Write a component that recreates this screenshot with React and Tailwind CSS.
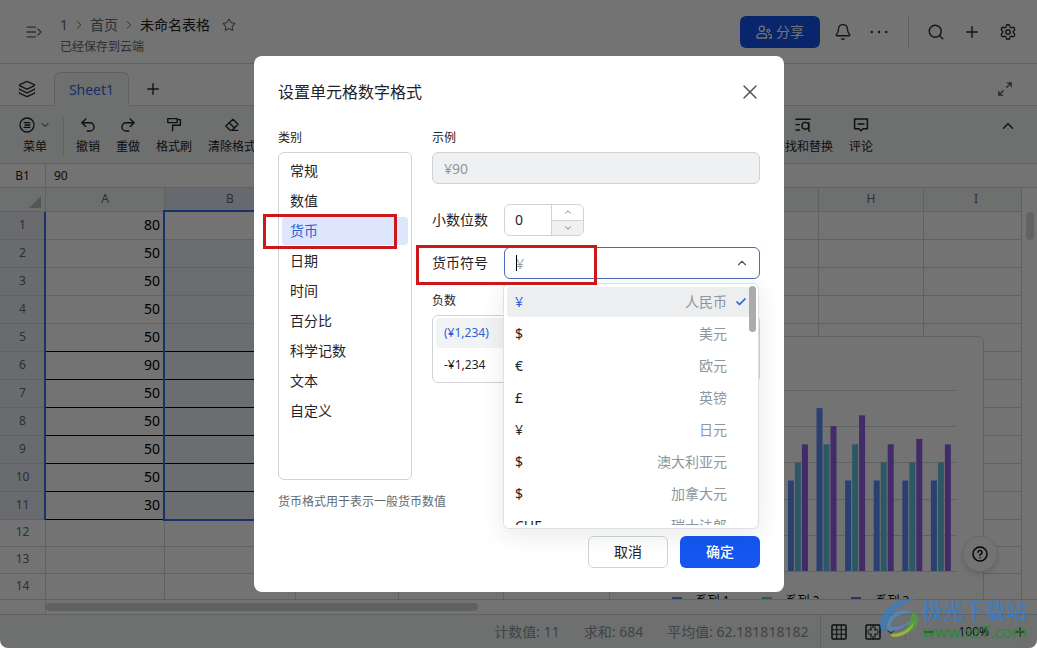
import React, { useState } from 'react';
import {
  Bell,
  Check,
  ChevronDown,
  ChevronRight,
  ChevronUp,
  Layers,
  Minus,
  Plus,
  Redo2,
  Search,
  Settings,
  Star,
  Undo2,
  X,
} from 'lucide-react';

const columns = ['A', 'B', 'C', 'D', 'E', 'F', 'G', 'H', 'I'];
const values = [80, 50, 50, 50, 50, 90, 50, 50, 50, 50, 30];
const rows = Array.from({ length: 14 }, (_, i) => i + 1);

const categories = ['常规', '数值', '货币', '日期', '时间', '百分比', '科学记数', '文本', '自定义'];

const currencies = [
  { symbol: '¥', name: '人民币' },
  { symbol: '$', name: '美元' },
  { symbol: '€', name: '欧元' },
  { symbol: '£', name: '英镑' },
  { symbol: '¥', name: '日元' },
  { symbol: '$', name: '澳大利亚元' },
  { symbol: '$', name: '加拿大元' },
  { symbol: 'CHF', name: '瑞士法郎' },
];

const series = [
  { name: '系列 1', color: '#5b8ff9', data: [80, 50, 50, 50, 50, 90, 50, 50, 50, 50] },
  { name: '系列 2', color: '#62c4e3', data: [60, 60, 60, 60, 60, 70, 70, 60, 60, 60] },
  { name: '系列 3', color: '#945fea', data: [70, 70, 70, 70, 70, 80, 86, 70, 73, 70] },
];

const Svg = ({ size = 16, children, ...rest }) => (
  <svg
    width={size}
    height={size}
    viewBox="0 0 16 16"
    fill="none"
    stroke="currentColor"
    strokeWidth="1.3"
    strokeLinecap="round"
    strokeLinejoin="round"
    aria-hidden="true"
    {...rest}
  >
    {children}
  </svg>
);

const ExpandMenuIcon = () => (
  <Svg>
    <path d="M1 3.2h8.5M1 8h8.5M1 12.8h8.5M12 5l3 3-3 3" />
  </Svg>
);

const MenuIcon = () => (
  <Svg>
    <circle cx="8" cy="8" r="7" />
    <path d="M5.2 5.6h5.6M6 8h4.8M5.2 10.4h5.6" />
  </Svg>
);

const RollerIcon = () => (
  <Svg strokeWidth="1.4">
    <path d="M1.8 1.6h9.4v4H1.8zM11.2 2.6h3.2v5.6H6.6v5.6" />
  </Svg>
);

const EraserIcon = () => (
  <Svg>
    <path d="M9 2.2 14 7.2 8.2 13.2H6L1.8 9z" />
    <path d="M5.2 5.8l5 5M8.2 13.4h5.6" />
  </Svg>
);

const FindIcon = () => (
  <Svg strokeWidth="1.4">
    <path d="M1 2.2h14M1 7.6h3.4M1 13h3.4" />
    <circle cx="10.4" cy="8.8" r="3.4" />
    <path d="M13.8 5.6v7.8l1 .8" />
  </Svg>
);

const CommentIcon = () => (
  <Svg strokeWidth="1.5">
    <path d="M1.6 2h12.8v9.8H10L8 13.8l-2-2H1.6zM5 7h6" />
  </Svg>
);

const FullscreenIcon = () => (
  <Svg>
    <path d="M9.8 6.2 14 2M10.4 1.8h3.8v3.8M6.2 9.8 2 14M1.8 10.4v3.8h3.8" />
  </Svg>
);

const ShareIcon = () => (
  <Svg>
    <circle cx="5.8" cy="4.8" r="2.6" />
    <path d="M1 14v-1.4a3 3 0 0 1 3-3h3.6a3 3 0 0 1 3 3V14z" />
    <circle cx="12.4" cy="6.8" r="1.5" />
    <path d="M12.6 10.4h.8a2 2 0 0 1 2 2V14h-2" />
  </Svg>
);

const GridIcon = () => (
  <Svg strokeWidth="1.5">
    <rect x="1" y="1" width="14" height="14" rx="1" />
    <path strokeWidth="1.1" d="M1 5.7h14M1 10.3h14M5.7 1v14M10.3 1v14" />
  </Svg>
);

const FocusCellIcon = () => (
  <Svg strokeWidth="1.5">
    <rect x="1" y="1" width="14" height="14" rx="1" />
    <path strokeWidth="1.2" d="M6 3.2V6H3.2M10 3.2V6h2.8M6 12.8V10H3.2M10 12.8V10h2.8M8 1v2.4M8 12.6V15M1 8h2.4M12.6 8H15" />
  </Svg>
);

const HelpIcon = () => (
  <Svg strokeWidth="1.4">
    <circle cx="8" cy="8" r="7" />
    <path d="M6 6.3a2 2 0 1 1 2.8 1.9c-.5.2-.8.5-.8 1v.2M8 11.6v.1" />
  </Svg>
);

const Tool = ({ label, children }) => (
  <button type="button" className="flex flex-col items-center gap-1 text-[#1f2329]">
    <span className="flex h-4 items-center">{children}</span>
    <span className="text-xs leading-5">{label}</span>
  </button>
);

const Header = () => (
  <header className="flex h-16 shrink-0 items-center border-b border-[#d5d8da] pr-5 pl-[26px] text-[#2b2f36]">
    <button type="button" aria-label="展开目录" className="mr-[18px] text-[#646a73]">
      <ExpandMenuIcon />
    </button>
    <div className="pt-1.5">
      <nav className="flex items-center gap-1 text-sm text-[#646a73]">
        <a href="#space">1</a>
        <ChevronRight size={14} strokeWidth={1.6} />
        <a href="#home">首页</a>
        <ChevronRight size={14} strokeWidth={1.6} />
        <span className="text-[#1f2329]">未命名表格</span>
        <button type="button" aria-label="收藏" className="ml-2">
          <Star size={14} strokeWidth={1.8} />
        </button>
      </nav>
      <p className="mt-1 text-xs leading-4 text-[#646a73]">已经保存到云端</p>
    </div>
    <div className="ml-auto flex items-center">
      <button
        type="button"
        className="mr-3.5 flex h-8 w-20 items-center justify-center gap-1 rounded-md bg-[#1456f0] text-sm text-white"
      >
        <ShareIcon />
        分享
      </button>
      <button type="button" aria-label="通知" className="mr-[18px]">
        <Bell size={18} strokeWidth={1.8} />
      </button>
      <button type="button" aria-label="更多">
        <Svg size={18} fill="currentColor" stroke="none">
          <circle cx="1.6" cy="8" r="1.1" />
          <circle cx="8" cy="8" r="1.1" />
          <circle cx="14.4" cy="8" r="1.1" />
        </Svg>
      </button>
      <span className="mr-[18px] ml-5 h-8 w-px bg-[#d5d8da]" />
      <div className="flex items-center gap-[18px]">
        <button type="button" aria-label="搜索"><Search size={18} strokeWidth={1.9} /></button>
        <button type="button" aria-label="新建"><Plus size={18} strokeWidth={1.9} /></button>
        <button type="button" aria-label="设置"><Settings size={18} strokeWidth={1.9} /></button>
      </div>
    </div>
  </header>
);

const SheetTabs = () => (
  <div className="flex h-[42px] shrink-0 items-end border-b border-[#d5d8da] pr-6 text-[#2b2f36]">
    <button type="button" aria-label="图层" className="flex h-8 w-[54px] items-center justify-center">
      <Layers size={18} strokeWidth={1.8} />
    </button>
    <button
      type="button"
      className="-mb-px h-[34px] w-[75px] rounded-t-md border border-b-0 border-[#d5d8da] bg-[#f3f7f6] text-sm text-[#3f66e0]"
    >
      Sheet1
    </button>
    <button type="button" aria-label="添加工作表" className="ml-[15px] flex h-8 items-center">
      <Plus size={18} strokeWidth={1.9} />
    </button>
    <button type="button" aria-label="全屏" className="ml-auto flex h-8 items-center text-[#51565d]">
      <FullscreenIcon />
    </button>
  </div>
);

const Toolbar = () => (
  <div className="flex h-[58px] shrink-0 items-center gap-3 border-b border-[#d5d8da] bg-[#f3f7f6] pt-[5px] pr-5 pl-[19px] text-[#1f2329]">
    <button type="button" className="flex flex-col items-center gap-1">
      <span className="flex h-4 items-center gap-1">
        <MenuIcon />
        <ChevronDown size={12} />
      </span>
      <span className="text-xs leading-5">菜单</span>
    </button>
    <div className="flex items-center gap-4">
      <span className="-mr-1 h-10 w-px bg-[#d5d8da]" />
      <Tool label="撤销"><Undo2 size={18} strokeWidth={1.9} /></Tool>
      <Tool label="重做"><Redo2 size={18} strokeWidth={1.9} /></Tool>
      <Tool label="格式刷"><RollerIcon /></Tool>
      <Tool label="清除格式"><EraserIcon /></Tool>
    </div>
    <div className="mr-[114px] ml-auto flex gap-4">
      <Tool label="查找和替换"><FindIcon /></Tool>
      <Tool label="评论"><CommentIcon /></Tool>
    </div>
    <button type="button" aria-label="收起工具栏" className="mt-1.5 self-start">
      <ChevronUp size={18} strokeWidth={1.8} />
    </button>
  </div>
);

const rowLine = (row) => {
  if (row <= 4) return 'border-b-[#f5d890]';
  if (row <= 11) return 'border-b-black';
  return 'border-b-[#d5d8da]';
};

const Grid = () => (
  <table className="w-[1029px] min-w-full table-fixed border-separate border-spacing-0 text-sm leading-5">
    <colgroup>
      <col className="w-[46px]" />
      <col className="w-[119px]" />
      <col className="w-[131px]" />
      <col className="w-[103px]" />
      <col className="w-[105px]" />
      <col className="w-[106px]" />
      <col className="w-[104px]" />
      <col className="w-[105px]" />
      <col className="w-[105px]" />
      <col />
    </colgroup>
    <thead>
      <tr className="h-6 bg-[#f3f7f6] text-xs text-[#646a73]">
        <th className="border-r border-b border-[#d5d8da] p-0">
          <svg width="12" height="12" viewBox="0 0 12 12" className="mt-1 mr-1 ml-auto" aria-hidden="true">
            <path d="M12 0v12H0z" fill="#bbbfc4" />
          </svg>
        </th>
        {columns.map((name) => (
          <th
            key={name}
            className={`border-r border-b border-[#d5d8da] p-0 pb-0.5 font-normal ${
              name === 'B' ? 'bg-[#e6e9f5]' : ''
            }`}
          >
            {name}
          </th>
        ))}
      </tr>
    </thead>
    <tbody>
      {rows.map((row) => (
        <tr key={row} className={row <= 11 ? 'h-7' : 'h-[27px]'}>
          <th
            className={`border-r border-b border-[#d5d8da] p-0 pb-0.5 text-xs font-normal text-[#646a73] ${
              row <= 11 ? 'bg-[#e8edf7]' : ''
            }`}
          >
            {row}
          </th>
          <td className={`border-r border-b border-r-[#d5d8da] p-0 pr-1 pb-0.5 text-right text-black ${rowLine(row)}`}>
            {values[row - 1]}
          </td>
          <td
            className={`border-r border-b border-r-[#d5d8da] p-0 ${rowLine(row)} ${
              row > 1 && row <= 11 ? 'bg-[#eef2fa]' : ''
            }`}
          />
          {columns.slice(2).map((name) => (
            <td key={name} className="border-r border-b border-[#d5d8da] p-0" />
          ))}
        </tr>
      ))}
    </tbody>
  </table>
);

const Chart = () => {
  const step = 28.6;
  const unit = 1.81;
  return (
    <div className="absolute top-[148px] left-[609px] w-[375px] rounded-md border border-[#d5d8da] bg-white">
      <svg width="373" height="252" viewBox="0 0 373 252" className="block" aria-hidden="true">
        {[0, 1, 2, 3, 4, 5].map((i) => (
          <rect key={i} x="60" y={Math.round(53 + i * 36.2)} width="286" height="1" fill="#d5d8da" />
        ))}
        {series.map((s, n) =>
          s.data.map((v, i) => (
            <rect
              key={`${n}-${i}`}
              x={63.5 + i * step + n * 7}
              y={234 - v * unit}
              width="6"
              height={v * unit}
              fill={s.color}
            />
          ))
        )}
      </svg>
      <ul className="flex justify-center gap-8 pr-3 pb-3 text-xs leading-6">
        {series.map((s) => (
          <li key={s.name} className="flex items-center gap-3.5">
            <span className="h-2 w-2.5" style={{ backgroundColor: s.color }} />
            {s.name}
          </li>
        ))}
      </ul>
    </div>
  );
};

const StatusBar = () => (
  <footer className="flex h-[33px] shrink-0 items-center bg-[#f3f7f6] pr-2.5 text-[#1f2329]">
    <div className="ml-auto flex gap-6 text-sm text-[#8f959e]">
      <span>计数值: 11</span>
      <span>求和: 684</span>
      <span>平均值: 62.181818182</span>
    </div>
    <span className="mr-2.5 ml-3 h-full w-px bg-[#d5d8da]" />
    <button type="button" aria-label="网格线"><GridIcon /></button>
    <button type="button" aria-label="聚焦单元格" className="ml-[18px] flex items-center gap-1">
      <FocusCellIcon />
      <ChevronDown size={12} />
    </button>
    <span className="mr-4 ml-2 h-4 w-px bg-[#d5d8da]" />
    <button type="button" aria-label="缩小"><Minus size={14} /></button>
    <span className="mr-6 ml-[22px] text-xs">100%</span>
    <button type="button" aria-label="放大"><Plus size={14} /></button>
  </footer>
);

const Highlight = ({ className }) => (
  <span className={`pointer-events-none absolute z-20 border-[3px] border-[#cc171b] ${className}`} />
);

const CurrencySelect = () => (
  <div className="relative w-64">
    <input
      id="currency"
      role="combobox"
      aria-expanded="true"
      aria-controls="currency-options"
      placeholder="¥"
      className="block h-8 w-full rounded-md border border-[#4a6cb0] bg-white px-[11px] text-sm text-[#1f2329] outline-none placeholder:text-[#9a9fa6]"
    />
    <span className="absolute top-2 left-3 h-4 w-px bg-black" />
    <ChevronUp size={14} className="absolute top-[9px] right-[11px] text-[#51565d]" />
    <Highlight className="-top-0.5 -left-[88px] h-10 w-[181px]" />
    <div className="absolute top-9 -left-px z-10 h-[246px] w-64 rounded-md border border-[#dee0e3] bg-white p-[3px] shadow-[0_6px_24px_rgba(31,35,41,0.1)]">
      <ul id="currency-options" role="listbox" className="flex h-full flex-col gap-0.5 overflow-hidden text-sm">
        {currencies.map((c, i) => (
          <li
            key={c.name}
            role="option"
            aria-selected={i === 0}
            className={`flex h-[30px] shrink-0 items-center rounded px-2 pb-px ${
              i === 0 ? 'bg-[#eceeef] text-[#2f5fd8]' : 'text-[#1f2329]'
            }`}
          >
            <span>{c.symbol}</span>
            <span className="ml-auto text-[#8f959e]">{c.name}</span>
            <span className="ml-2 w-3">{i === 0 && <Check size={12} strokeWidth={3.4} />}</span>
          </li>
        ))}
      </ul>
      <span className="absolute top-0.5 right-0.5 h-[46px] w-[7px] rounded-full bg-[#a9abad]" />
    </div>
  </div>
);

const FormatDialog = () => {
  const [category, setCategory] = useState('货币');

  return (
    <section
      role="dialog"
      aria-labelledby="dialog-title"
      className="w-[530px] rounded-lg bg-white p-6 text-[#1f2329]"
    >
      <div className="flex h-6 items-center justify-between">
        <h2 id="dialog-title" className="text-base">设置单元格数字格式</h2>
        <button type="button" aria-label="关闭" className="-mr-0.5 text-[#51565d]">
          <X size={24} strokeWidth={1.5} />
        </button>
      </div>

      <div className="mt-6 flex gap-5">
        <div className="w-[134px] shrink-0">
          <h3 className="text-xs leading-5">类别</h3>
          <div className="relative mt-1 h-[328px] rounded-md border border-[#d0d3d6] px-[3px] py-1">
            <ul className="flex flex-col gap-0.5">
              {categories.map((name) => (
                <li key={name}>
                  <button
                    type="button"
                    onClick={() => setCategory(name)}
                    className={`block h-7 w-full rounded px-2 text-left text-sm ${
                      name === category ? 'bg-[#dde6fc] text-[#2f5fd8]' : ''
                    }`}
                  >
                    {name}
                  </button>
                </li>
              ))}
            </ul>
            <Highlight className="top-[61px] -left-4 h-[35px] w-[134px]" />
          </div>
          <p className="mt-3 text-xs leading-5 whitespace-nowrap text-[#646a73]">
            货币格式用于表示一般货币数值
          </p>
        </div>

        <div className="min-w-0 flex-1">
          <label htmlFor="sample" className="block text-xs leading-5">示例</label>
          <input
            id="sample"
            disabled
            value="¥90"
            className="mt-1 block h-8 w-full rounded-md border border-[#d0d3d6] bg-[#eff0f1] px-[11px] text-sm text-[#8f959e]"
          />

          <div className="mt-5 flex items-center">
            <label htmlFor="decimals" className="w-[72px] text-sm">小数位数</label>
            <div className="flex h-8 w-20 overflow-hidden rounded-md border border-[#d0d3d6]">
              <input id="decimals" defaultValue="0" className="w-[46px] px-2.5 text-sm outline-none" />
              <div className="flex flex-1 flex-col border-l border-[#d0d3d6] text-[#646a73]">
                <button type="button" aria-label="增加" className="flex flex-1 items-center justify-center">
                  <ChevronUp size={10} />
                </button>
                <button
                  type="button"
                  aria-label="减少"
                  className="flex flex-1 items-center justify-center border-t border-[#d0d3d6] bg-[#eff0f1]"
                >
                  <ChevronDown size={10} />
                </button>
              </div>
            </div>
          </div>

          <div className="mt-[11px] flex items-center">
            <label htmlFor="currency" className="w-[72px] text-sm">货币符号</label>
            <CurrencySelect />
          </div>

          <h3 className="mt-3 text-xs leading-5">负数</h3>
          <ul className="mt-1 rounded-md border border-[#d0d3d6] px-[3px] py-0.5 text-sm">
            <li>
              <button type="button" className="block h-[30px] w-full rounded bg-[#f2f3f4] px-2 text-left text-xs text-[#2f5fd8]">
                (¥1,234)
              </button>
            </li>
            <li className="mt-0.5">
              <button type="button" className="block h-[30px] w-full rounded px-2 text-left text-xs">
                -¥1,234
              </button>
            </li>
          </ul>
        </div>
      </div>

      <div className="mt-6 flex justify-end gap-3 text-sm">
        <button type="button" className="h-8 w-20 rounded-md border border-[#d0d3d6] bg-white">取消</button>
        <button type="button" className="h-8 w-20 rounded-md bg-[#1456f0] font-medium text-white">确定</button>
      </div>
    </section>
  );
};

const Watermark = () => (
  <div className="pointer-events-none absolute right-2.5 bottom-1.5 flex items-start gap-0.5 opacity-75">
    <svg width="42" height="42" viewBox="0 0 42 42" className="shrink-0" aria-hidden="true">
      <path d="M39 1C22 0 6 9 3 22c-2 7 0 12 4 14-1-6 0-11 4-17C16 11 26 4 39 1z" fill="#2f7fd0" />
      <path d="M34 15C26 8 11 15 9 27c-1 4 1 6 5 6 7-1 15-5 20-11-6 4-13 7-18 7-3 0-4-2-3-4 3-6 12-11 21-10z" fill="#4b8fd0" />
      <path d="M34 14c7 3 8 10 3 16-5 5-12 8-20 9 8-4 16-12 17-25z" fill="#4aa63c" />
      <path d="M12 36c10 0 19-4 24-12-1 9-12 16-22 15 0-1-1-2-2-3z" fill="#a9c832" />
    </svg>
    <div className="font-medium">
      <p className="text-[21px] leading-6 text-[#2f80d8]">极光下载站</p>
      <p className="text-base leading-5 text-[#1f8f2c]">www.xz7.com</p>
    </div>
  </div>
);

const App = () => {
  return (
    <div className="relative flex h-screen flex-col overflow-hidden rounded-b-lg bg-white font-['Noto_Sans','Noto_Sans_CJK_SC',sans-serif]">
      <Header />
      <SheetTabs />
      <Toolbar />

      <div className="flex h-6 shrink-0 border-b border-[#d5d8da] text-xs leading-6 text-[#1f2329]">
        <span className="w-[46px] border-r border-[#d5d8da] text-center">B1</span>
        <span className="px-2">90</span>
      </div>

      {/* Sheet area */}
      <main className="relative flex min-h-0 flex-1 overflow-hidden border-b border-[#d5d8da]">
        <div className="min-w-0 flex-1 overflow-hidden">
          <Grid />
        </div>
        <div className="w-4 shrink-0 border-l border-[#d5d8da] px-1 pt-6">
          <div className="h-7 w-2 rounded-full bg-[#dadcdf]" />
        </div>
        <span className="absolute top-6 left-11 h-[308px] w-0.5 bg-[#3370eb]" />
        <span className="absolute top-[22px] left-[163px] h-[311px] w-[133px] border-2 border-[#3370eb]" />
        <Chart />
        <button
          type="button"
          aria-label="帮助"
          className="absolute right-[39px] bottom-[27px] flex h-9 w-9 items-center justify-center rounded-full border border-[#e4e6e8] bg-white shadow-md"
        >
          <HelpIcon />
        </button>
      </main>

      <div className="flex h-[15px] shrink-0 items-center border-b border-[#d5d8da]">
        <span className="h-full w-[46px] border-r border-[#d5d8da]" />
        <span className="h-2 w-[432px] rounded-full bg-[#d3d5d8]" />
      </div>

      <StatusBar />

      {/* Dialog over the dimmed page */}
      <div className="absolute inset-0 flex items-center justify-center bg-black/55 pl-px">
        <FormatDialog />
      </div>

      <Watermark />
    </div>
  );
};

export default App;
